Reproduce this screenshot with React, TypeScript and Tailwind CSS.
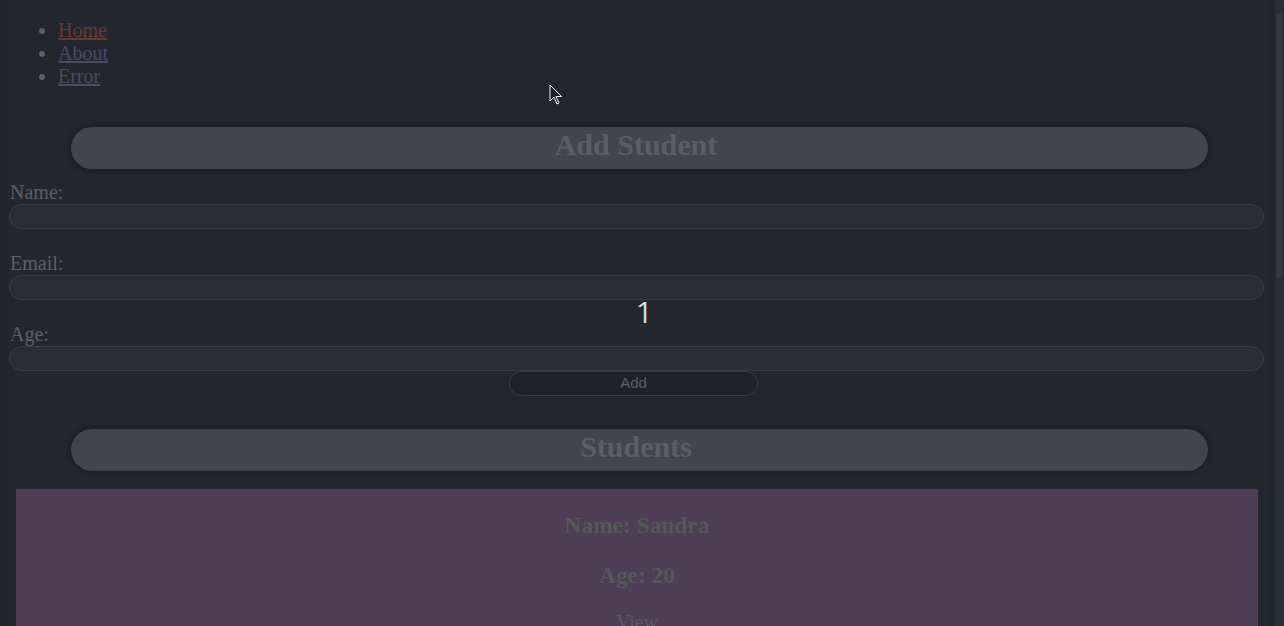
import React from "react";

const serif = { fontFamily: '"Liberation Serif", "Times New Roman", serif' };

function Heading({ children }: { children: React.ReactNode }) {
  return (
    <div className="ml-[63px] mr-[58px] h-[42px] rounded-full bg-[#42454d] pb-[6px] pr-[7px] shadow-[0_0_5px_2px_rgba(20,21,26,0.55)] flex items-center justify-center">
      <h2 className="text-[30px] font-bold leading-none text-[#5b5e65]">{children}</h2>
    </div>
  );
}

function Field({ label }: { label: string }) {
  return (
    <div>
      <label className="block pl-[2px] text-[20px] leading-[23px] text-[#5d6066]">{label}</label>
      <div className="ml-px mr-[2px] h-[25px] rounded-full border border-[#3b3e47] bg-[#2b2d35]" />
    </div>
  );
}

export default function App() {
  return (
    <div className="relative flex h-[626px] w-[1284px] overflow-hidden bg-[#22242b]" style={serif}>
      <div className="ml-2 w-[1258px] bg-[#23262e]">
        <ul className="ml-[10px] mt-[19px] list-disc pl-10 text-[20px] leading-[23px] text-[#5c5f65]">
          <li>
            <a className="text-[#653a30] underline decoration-[#653a30]">Home</a>
          </li>
          <li>
            <a className="text-[#4a4d63] underline decoration-[#4a4d63]">About</a>
          </li>
          <li>
            <a className="text-[#4a4d63] underline decoration-[#4a4d63]">Error</a>
          </li>
        </ul>
        <div className="mt-[39px]">
          <Heading>Add Student</Heading>
        </div>
        <div className="mt-[12px]">
          <Field label="Name:" />
        </div>
        <div className="mt-[23px]">
          <Field label="Email:" />
        </div>
        <div className="mt-[23px]">
          <Field label="Age:" />
        </div>
        <button
          className="ml-[501px] block h-[25px] w-[249px] rounded-full border border-[#3a3d45] bg-[#1f2128] pb-[2px] text-[15px] leading-none text-[#5b5e65]"
          style={{ fontFamily: '"Liberation Sans", Arial, sans-serif' }}
        >
          Add
        </button>
        <div className="mt-[33px]">
          <Heading>Students</Heading>
        </div>
        <div className="mx-2 mt-[18px] h-[200px] bg-[#4f3c57] pt-[23px] text-center">
          <h3 className="text-[23.4px] font-bold leading-[27px] text-[#535a57]">Name: Sandra</h3>
          <h3 className="mt-[23px] text-[23.4px] font-bold leading-[27px] text-[#535a57]">Age: 20</h3>
          <p className="mt-[22px] text-[20px] leading-[23px] text-[#5a5d61]">View</p>
        </div>
      </div>
      <div className="ml-auto flex w-[9px] flex-col bg-[#2a2d33]">
        <div className="h-[14px]" />
        <div className="mx-[2px] h-[264px] bg-[#363a40]" />
      </div>
      <div
        className="pointer-events-none absolute left-[636px] top-[290px] text-[29px] font-light text-[#e6e6e6] [text-shadow:-0.5px_0_0_#7fb3d9,0.5px_0_0_#d9c27f]"
        style={{ fontFamily: '"Open Sans", "Liberation Sans", sans-serif' }}
      >
        1
      </div>
      <svg className="pointer-events-none absolute left-[549px] top-[84px]" width="14" height="22" viewBox="0 0 14 22">
        <path d="M1 1 L1 17 L5 13 L8 20 L10 19 L7 12.5 L12.5 12.5 Z" fill="#1a1b20" stroke="#f2f2f2" strokeWidth="1" strokeLinejoin="miter" />
      </svg>
    </div>
  );
}
